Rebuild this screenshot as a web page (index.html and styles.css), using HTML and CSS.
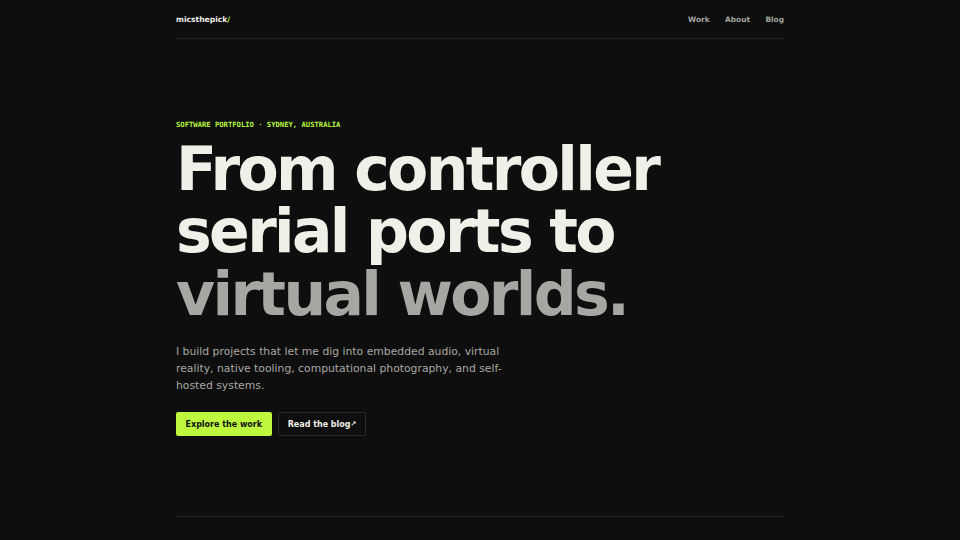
FILE: index.html
```html
<!DOCTYPE html>
<html lang="en">
<head>
<meta charset="utf-8">
<title>micsthepick</title>
<link rel="stylesheet" href="styles.css">
</head>
<body>
<div class="page">
  <header class="site-header">
    <a class="logo" href="#">micsthepick<span class="slash">/</span></a>
    <nav class="nav">
      <a href="#">Work</a>
      <a href="#">About</a>
      <a href="#">Blog</a>
    </nav>
  </header>
  <main class="hero">
    <p class="eyebrow">SOFTWARE PORTFOLIO · SYDNEY, AUSTRALIA</p>
    <h1 class="headline">From controller<br>serial ports to<br><span class="dim">virtual worlds.</span></h1>
    <p class="lede">I build projects that let me dig into embedded audio, virtual reality, native tooling, computational photography, and self-hosted systems.</p>
    <div class="actions">
      <a class="btn btn-primary" href="#">Explore the work</a>
      <a class="btn btn-ghost" href="#">Read the blog<span class="arrow">↗</span></a>
    </div>
  </main>
  <div class="rule"></div>
</div>
</body>
</html>
```
FILE: styles.css
```css
* { box-sizing: border-box; }
html, body {
  margin: 0;
  padding: 0;
  background: #0e0e0e;
}
body {
  font-family: "DejaVu Sans", "Liberation Sans", sans-serif;
  color: #f0efe8;
  height: 540px;
  overflow: hidden;
}
a { text-decoration: none; color: inherit; }
.page {
  width: 608px;
  margin: 0 auto;
}
.site-header {
  height: 39px;
  border-bottom: 1px solid #262626;
  display: flex;
  align-items: center;
  justify-content: space-between;
}
.logo {
  font-weight: 700;
  font-size: 7.6px;
  color: #f0efe8;
}
.slash { color: #b8f53c; }
.nav {
  display: flex;
  gap: 15.5px;
}
.nav a {
  font-weight: 700;
  font-size: 7.4px;
  color: #a3a39f;
}
.hero {
  padding-top: 81px;
  height: 477px;
}
.eyebrow {
  margin: 0;
  font-family: "DejaVu Sans Mono", monospace;
  font-size: 7.2px;
  line-height: 9px;
  color: #b8f53c;
  font-weight: 700;
}
.headline {
  margin: 9px 0 0 0;
  font-size: 60px;
  line-height: 62.4px;
  font-weight: 700;
  letter-spacing: -0.044em;
  color: #f0efe8;
}
.dim { color: #a5a7a2; }
.lede {
  margin: 18px 0 0 0;
  max-width: 336px;
  font-size: 10.8px;
  line-height: 17px;
  color: #a8a8a4;
}
.actions {
  display: flex;
  gap: 6.5px;
  margin-top: 18px;
}
.btn {
  height: 24px;
  display: inline-flex;
  align-items: center;
  padding: 0 9.5px;
  font-size: 8px;
  font-weight: 700;
  border-radius: 2px;
}
.btn-primary {
  background: #bdf73e;
  color: #111;
}
.btn-ghost {
  border: 1px solid #2a2a2a;
  color: #f0efe8;
  padding: 0 8.5px;
}
.arrow { font-size: 7px; }
.rule {
  border-top: 1px solid #262626;
}
```
